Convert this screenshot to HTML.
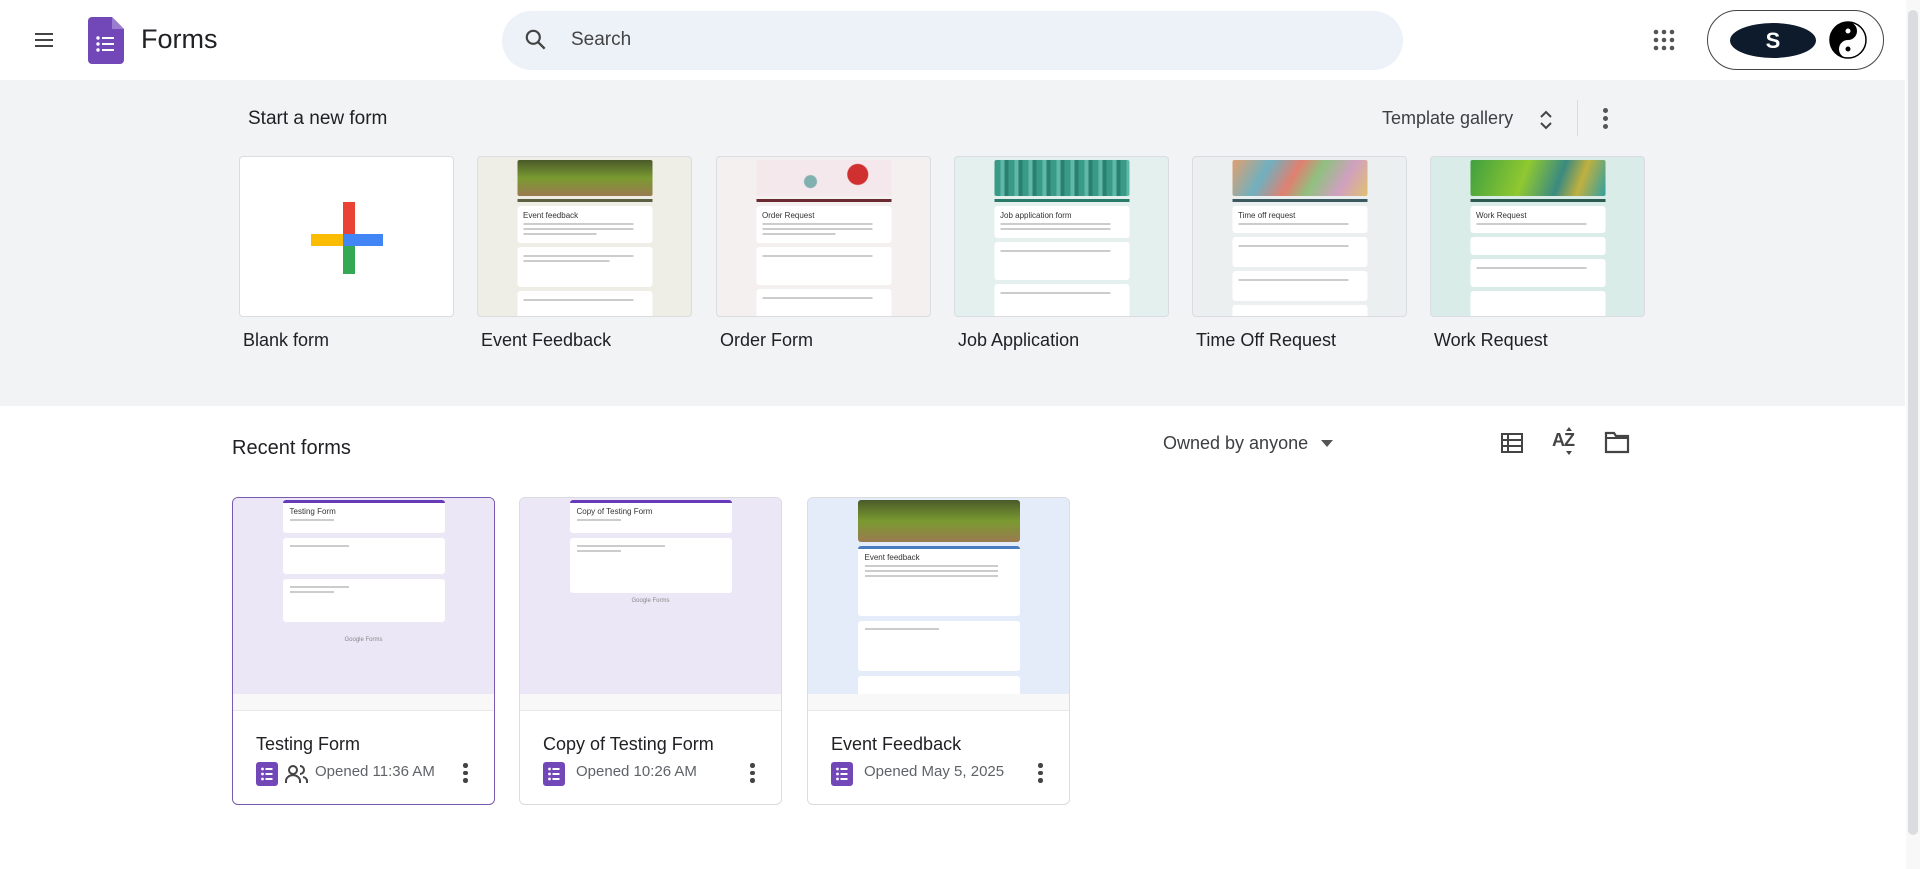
<!DOCTYPE html>
<html><head><meta charset="utf-8">
<style>
*{box-sizing:border-box;margin:0;padding:0}
body{width:1920px;height:869px;overflow:hidden;background:#fff;font-family:"Liberation Sans",sans-serif;color:#202124;position:relative}
.a{position:absolute}
.band{left:0;top:80px;width:1905px;height:326px;background:#f1f3f4}
.sb{left:1906px;top:0;width:14px;height:869px;background:#f8f8f8}
.sbt{left:1908px;top:10px;width:10px;height:825px;background:#dadce0;border-radius:5px}
.tile{width:215px;height:161px;border:1px solid #dadce0;border-radius:4px;top:156px;overflow:hidden}
.lbl{top:330px;font-size:18px;color:#202124}
.col{position:absolute;left:50%;transform:translateX(-50%);width:135px;top:3px;bottom:0}
.hdr{height:36px;border-radius:2px}
.bar{height:3px}
.wc{background:#fff;border-radius:3px;margin-top:4px;padding:5px 6px}
.ln{height:2px;background:#ccc;margin:3px 0;width:90%}
.tt{font-size:8px;color:#333}
.card{top:497px;width:263px;height:308px;border:1px solid #dadce0;border-radius:6px;overflow:hidden;background:#fff}
.th{position:absolute;left:0;top:0;width:100%;height:196px}
.strip{position:absolute;left:0;top:196px;width:100%;height:17px;background:#f8f8f8;border-bottom:1px solid #e8e8e8}
.ctitle{position:absolute;left:23px;top:236px;font-size:18px;color:#202124}
.csub{position:absolute;top:265px;font-size:15px;color:#5f6368}
.ficon{position:absolute;left:23px;top:264px;width:22px;height:24px}
.dots{position:absolute;left:230px;top:265px;width:4px;height:22px}
.dots i{display:block;width:4.5px;height:4.5px;background:#444;border-radius:50%;margin-bottom:3px}
.fc{position:absolute;left:50%;transform:translateX(-50%);width:162px;top:2px}
.fw{background:#fff;border-radius:3px;margin-bottom:5px;padding:4px 7px}
</style></head><body>

<svg class="a" style="left:32px;top:28px" width="24" height="24" viewBox="0 0 24 24"><path d="M3 6h18M3 12h18M3 18h18" stroke="#444" stroke-width="2"/></svg>
<svg class="a" style="left:88px;top:17px" width="36" height="47" viewBox="0 0 36 47"><path d="M4 0h20l12 12v31a4 4 0 0 1-4 4H4a4 4 0 0 1-4-4V4a4 4 0 0 1 4-4z" fill="#7248b9"/><path d="M24 0v12h12z" fill="#9a7cd0"/><g fill="#fff"><circle cx="10" cy="21" r="1.7"/><circle cx="10" cy="27" r="1.7"/><circle cx="10" cy="33" r="1.7"/><rect x="14" y="20" width="12" height="2"/><rect x="14" y="26" width="12" height="2"/><rect x="14" y="32" width="12" height="2"/></g></svg>
<div class="a" style="left:141px;top:24px;font-size:27px;color:#202124">Forms</div>
<div class="a" style="left:502px;top:11px;width:901px;height:59px;border-radius:30px;background:#edf1f8"></div>
<svg class="a" style="left:523px;top:27px" width="26" height="26" viewBox="0 0 24 24"><circle cx="9.5" cy="9.5" r="6" fill="none" stroke="#444" stroke-width="2"/><path d="M14 14l6 6" stroke="#444" stroke-width="2.2"/></svg>
<div class="a" style="left:571px;top:29px;font-size:19px;color:#444">Search</div>
<svg class="a" style="left:1653px;top:29px" width="22" height="22" viewBox="0 0 22 22" fill="#555"><circle cx="3" cy="3" r="2.3"/><circle cx="11" cy="3" r="2.3"/><circle cx="19" cy="3" r="2.3"/><circle cx="3" cy="11" r="2.3"/><circle cx="11" cy="11" r="2.3"/><circle cx="19" cy="11" r="2.3"/><circle cx="3" cy="19" r="2.3"/><circle cx="11" cy="19" r="2.3"/><circle cx="19" cy="19" r="2.3"/></svg>
<div class="a" style="left:1707px;top:10px;width:177px;height:60px;border:1.5px solid #444;border-radius:30px"></div>
<div class="a" style="left:1730px;top:23px;width:86px;height:35px;border-radius:50%;background:#0e1b2c;color:#fff;font-weight:bold;font-size:22px;text-align:center;line-height:35px">S</div>
<svg class="a" style="left:1828px;top:20px" width="40" height="40" viewBox="0 0 40 40"><circle cx="20" cy="20" r="18" fill="#fff" stroke="#000" stroke-width="1.5"/><path d="M20 2a18 18 0 0 0 0 36a9 9 0 0 1 0-18a9 9 0 0 0 0-18z" fill="#000"/><circle cx="20" cy="11" r="2.5" fill="#fff"/><circle cx="20" cy="29" r="2.5" fill="#000"/></svg>

<div class="a sb"></div><div class="a sbt"></div>
<div class="a band"></div>

<div class="a" style="left:248px;top:108px;font-size:19px;color:#202124">Start a new form</div>
<div class="a" style="left:1382px;top:108px;font-size:18px;color:#3c4043">Template gallery</div>
<svg class="a" style="left:1535px;top:107px" width="22" height="26" viewBox="0 0 22 26"><path d="M6 10l5-5 5 5M6 16l5 5 5-5" fill="none" stroke="#444" stroke-width="2"/></svg>
<div class="a" style="left:1577px;top:100px;width:1px;height:36px;background:#dadce0"></div>
<div class="a" style="left:1603px;top:108px"><div style="width:5px;height:5px;border-radius:50%;background:#555;margin-bottom:3px"></div><div style="width:5px;height:5px;border-radius:50%;background:#555;margin-bottom:3px"></div><div style="width:5px;height:5px;border-radius:50%;background:#555"></div></div>

<div class="a tile" style="left:239px;background:#fff">
<svg style="position:absolute;left:71px;top:45px" width="72" height="72" viewBox="0 0 72 72"><rect x="32" y="0" width="12" height="38" fill="#ea4335"/><rect x="0" y="32" width="32" height="12" fill="#fbbc04"/><rect x="32" y="32" width="40" height="12" fill="#4285f4"/><rect x="32" y="44" width="12" height="28" fill="#34a853"/></svg>
</div>
<div class="a tile" style="left:477px;background:#eeeee6"><div class="col"><div class="hdr" style="background:linear-gradient(180deg,#4a5a2a,#7a9a30 50%,#9a7a50)"></div><div class="bar" style="background:#5a6040;margin-top:3px"></div><div class="wc"><div class="tt">Event feedback</div><div class="ln"></div><div class="ln"></div><div class="ln" style="width:60%"></div></div><div class="wc" style="height:40px"><div class="ln"></div><div class="ln" style="width:70%"></div></div><div class="wc" style="height:30px"><div class="ln"></div></div></div></div>
<div class="a tile" style="left:716px;background:#f5f0f0"><div class="col"><div class="hdr" style="background:radial-gradient(circle at 75% 40%,#d03030 0 10px,transparent 11px),radial-gradient(circle at 40% 60%,#80b0b0 0 6px,transparent 7px),#f5e8ec"></div><div class="bar" style="background:#6a2a30;margin-top:3px"></div><div class="wc"><div class="tt">Order Request</div><div class="ln"></div><div class="ln"></div><div class="ln" style="width:60%"></div></div><div class="wc" style="height:38px"><div class="ln"></div></div><div class="wc" style="height:30px"><div class="ln"></div></div></div></div>
<div class="a tile" style="left:954px;background:#e3f0ee"><div class="col"><div class="hdr" style="background:repeating-linear-gradient(90deg,#3a9a88 0 6px,#60b8a8 6px 10px,#2a8070 10px 14px)"></div><div class="bar" style="background:#2a7a6a;margin-top:3px"></div><div class="wc"><div class="tt">Job application form</div><div class="ln"></div><div class="ln"></div></div><div class="wc" style="height:38px"><div class="ln"></div></div><div class="wc" style="height:38px"><div class="ln"></div></div></div></div>
<div class="a tile" style="left:1192px;background:#ebeff0"><div class="col"><div class="hdr" style="background:linear-gradient(120deg,#e0a070,#70b0c0 25%,#e08070 45%,#90c080 60%,#d0a0c0 80%,#e0c070)"></div><div class="bar" style="background:#3a5a60;margin-top:3px"></div><div class="wc"><div class="tt">Time off request</div><div class="ln"></div></div><div class="wc" style="height:30px"><div class="ln"></div></div><div class="wc" style="height:30px"><div class="ln"></div></div><div class="wc" style="height:20px"></div></div></div>
<div class="a tile" style="left:1430px;background:#daece8"><div class="col"><div class="hdr" style="background:linear-gradient(110deg,#40a040,#90c830 40%,#3a8a80 65%,#c0b040 80%,#30a0a0)"></div><div class="bar" style="background:#2a5a50;margin-top:3px"></div><div class="wc"><div class="tt">Work Request</div><div class="ln"></div></div><div class="wc" style="height:18px"></div><div class="wc" style="height:28px"><div class="ln"></div></div><div class="wc" style="height:28px"></div></div></div>

<div class="a lbl" style="left:243px">Blank form</div>
<div class="a lbl" style="left:481px">Event Feedback</div>
<div class="a lbl" style="left:720px">Order Form</div>
<div class="a lbl" style="left:958px">Job Application</div>
<div class="a lbl" style="left:1196px">Time Off Request</div>
<div class="a lbl" style="left:1434px">Work Request</div>

<div class="a" style="left:232px;top:437px;font-size:20px;color:#202124">Recent forms</div>
<div class="a" style="left:1163px;top:433px;font-size:18px;color:#3c4043">Owned by anyone</div>
<svg class="a" style="left:1320px;top:438px" width="14" height="10"><path d="M1 2h12l-6 7z" fill="#555"/></svg>
<svg class="a" style="left:1500px;top:431px" width="24" height="24" viewBox="0 0 24 24"><rect x="2" y="3" width="20" height="18" fill="none" stroke="#444" stroke-width="2"/><path d="M2 9h20M2 15h20M8 3v18" stroke="#444" stroke-width="2"/></svg>
<div class="a" style="left:1552px;top:430px;font-size:18px;color:#444;font-weight:bold;letter-spacing:-1px">AZ</div>
<svg class="a" style="left:1558px;top:425px" width="24" height="32"><path d="M8 6l3-4 3 4M8 26l3 4 3-4" fill="#444"/></svg>
<svg class="a" style="left:1604px;top:430px" width="26" height="24" viewBox="0 0 26 24"><path d="M2 3h8l2 3h12v16H2z" fill="none" stroke="#444" stroke-width="2.2"/><path d="M2 8h22" stroke="#444" stroke-width="2"/></svg>

<svg width="0" height="0" style="position:absolute"><defs><symbol id="fi" viewBox="0 0 22 24"><rect width="22" height="24" rx="3" fill="#7248b9"/><g fill="#fff"><circle cx="6.5" cy="7" r="1.4"/><circle cx="6.5" cy="12" r="1.4"/><circle cx="6.5" cy="17" r="1.4"/><rect x="9.5" y="6" width="7" height="2"/><rect x="9.5" y="11" width="7" height="2"/><rect x="9.5" y="16" width="7" height="2"/></g></symbol></defs></svg>

<div class="a card" style="left:232px;border-color:#7a5ab0">
 <div class="th" style="background:#ece7f6"><div class="fc"><div class="fw" style="border-top:3px solid #673ab7;height:33px"><div class="tt">Testing Form</div><div class="ln" style="width:30%"></div></div><div class="fw" style="height:36px"><div class="ln" style="width:40%"></div></div><div class="fw" style="height:43px"><div class="ln" style="width:40%"></div><div class="ln" style="width:30%"></div></div><div style="height:10px"></div><div style="text-align:center;font-size:6px;color:#888">Google Forms</div></div></div>
 <div class="strip"></div>
 <div class="ctitle">Testing Form</div>
 <svg class="ficon"><use href="#fi"/></svg>
 <svg style="position:absolute;left:52px;top:266px" width="24" height="20" viewBox="0 0 24 20"><circle cx="8" cy="6" r="4" fill="none" stroke="#444" stroke-width="2"/><path d="M1 19v-2a6 5 0 0 1 14 0v2M15 2a4 4 0 0 1 0 8M18 13a5 4 0 0 1 4 4v2" fill="none" stroke="#444" stroke-width="2"/></svg>
 <div class="csub" style="left:82px">Opened 11:36 AM</div>
 <div class="dots"><i></i><i></i><i></i></div>
</div>
<div class="a card" style="left:519px">
 <div class="th" style="background:#ece7f6"><div class="fc"><div class="fw" style="border-top:3px solid #673ab7;height:33px"><div class="tt">Copy of Testing Form</div><div class="ln" style="width:30%"></div></div><div class="fw" style="height:55px"><div class="ln" style="width:60%"></div><div class="ln" style="width:30%"></div></div><div style="text-align:center;font-size:6px;color:#888">Google Forms</div></div></div>
 <div class="strip"></div>
 <div class="ctitle">Copy of Testing Form</div>
 <svg class="ficon"><use href="#fi"/></svg>
 <div class="csub" style="left:56px">Opened 10:26 AM</div>
 <div class="dots"><i></i><i></i><i></i></div>
</div>
<div class="a card" style="left:807px">
 <div class="th" style="background:#e4ecfa"><div class="fc"><div style="height:42px;border-radius:3px;background:linear-gradient(180deg,#4a5a2a,#7a9a30 50%,#9a7a50)"></div><div class="fw" style="border-top:3px solid #4a7cc0;margin-top:4px;height:70px"><div class="tt">Event feedback</div><div class="ln"></div><div class="ln"></div><div class="ln"></div></div><div class="fw" style="height:50px"><div class="ln" style="width:50%"></div></div><div class="fw" style="height:20px"></div></div></div>
 <div class="strip"></div>
 <div class="ctitle">Event Feedback</div>
 <svg class="ficon"><use href="#fi"/></svg>
 <div class="csub" style="left:56px">Opened May 5, 2025</div>
 <div class="dots"><i></i><i></i><i></i></div>
</div>
</body></html>
